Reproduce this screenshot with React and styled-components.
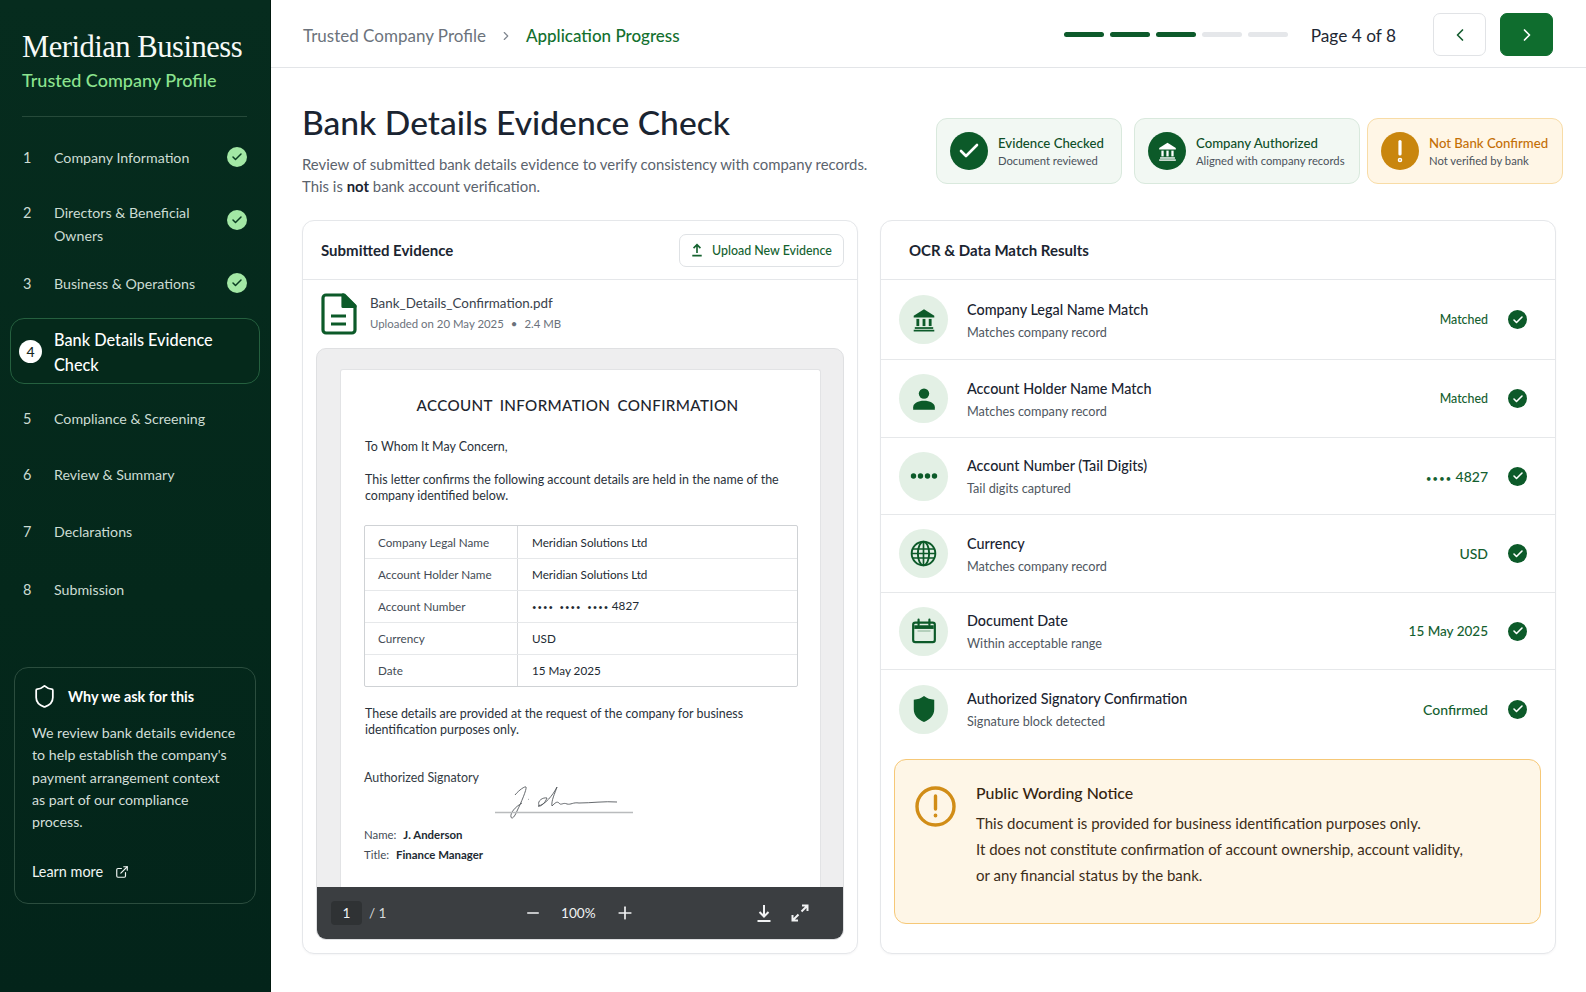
import React from "react";
import styled, { createGlobalStyle } from "styled-components";
import { Check, ChevronLeft, ChevronRight, ChevronRight as Crumb, ExternalLink, Minus, Plus, Shield } from "lucide-react";

const GlobalStyle = createGlobalStyle`
  * { box-sizing: border-box; }
  html, body { margin: 0; padding: 0; background: #fff; }
  body { font-family: Lato, "Noto Sans", sans-serif; color: #1c2530; -webkit-font-smoothing: antialiased; }
`;

const Page = styled.div`
  display: flex;
  width: 1586px;
  height: 992px;
  overflow: hidden;
`;

/* sidebar */
const Side = styled.aside`
  width: 271px;
  flex-shrink: 0;
  display: flex;
  flex-direction: column;
  background: linear-gradient(180deg, #062c1e 0%, #04281b 60%, #03241a 100%);
  border-right: 1px solid #02190f;
  padding: 0 10px 0 10px;
`;
const Brand = styled.div`
  margin: 0 13px 0 12px;
  padding-top: 29px;
  height: 117px;
  border-bottom: 1px solid #264a3a;
`;
const BrandName = styled.div`
  font-family: "Liberation Serif", serif;
  font-size: 30.6px;
  line-height: 36px;
  letter-spacing: -0.5px;
  color: #f7faf8;
`;
const BrandSub = styled.div`
  margin-top: 3px;
  font-size: 18px;
  line-height: 24px;
  font-weight: 500;
  color: #8ce48f;
`;
const Steps = styled.ol`
  list-style: none;
  margin: 12px 0 0;
  padding: 0;
`;
const Step = styled.li`
  display: flex;
  align-items: ${(p) => (p.$top ? "flex-start" : "center")};
  height: ${(p) => p.$h}px;
  padding: ${(p) => (p.$top ? "16px" : "0")} 13px 0 13px;
  color: #ccdcd3;
  font-size: 14.2px;
  line-height: 23px;
`;
const ActiveStep = styled.li`
  display: flex;
  align-items: center;
  height: 66px;
  margin: 7px 0 6px;
  padding: 1px 8px 0 8px;
  border: 1px solid #25603f;
  border-radius: 14px;
  background: #05291b;
  color: #fff;
  font-size: 16.3px;
  font-weight: 500;
  line-height: 25px;
`;
const StepNum = styled.span`
  width: 31px;
  flex-shrink: 0;
  font-size: 14.5px;
`;
const ActiveNum = styled.span`
  width: 23px;
  height: 23px;
  flex-shrink: 0;
  margin-right: 12px;
  border-radius: 50%;
  background: #fff;
  color: #17251e;
  display: flex;
  align-items: center;
  justify-content: center;
  font-size: 14px;
`;
const StepText = styled.span`
  flex: 1;
`;
const StepCheck = styled.span`
  width: 20px;
  height: 20px;
  margin-top: ${(p) => (p.$top ? "9px" : "0")};
  flex-shrink: 0;
  border-radius: 50%;
  background: #a3e8a5;
  color: #0a3d22;
  display: flex;
  align-items: center;
  justify-content: center;
`;
const WhyBox = styled.div`
  margin: 48px 4px 0 4px;
  height: 237px;
  padding: 16px 6px 0 17px;
  border: 1px solid #2b4d3e;
  border-radius: 14px;
`;
const WhyHead = styled.div`
  display: flex;
  align-items: center;
  gap: 11px;
  color: #fff;
  font-size: 14.4px;
  font-weight: 700;
  line-height: 24px;
`;
const WhyBody = styled.p`
  margin: 13px 0 0;
  color: #d3dfd9;
  font-size: 14.2px;
  line-height: 22.3px;
`;
const LearnMore = styled.a`
  display: flex;
  align-items: center;
  gap: 12px;
  margin-top: 30px;
  color: #f1f5f3;
  font-size: 14.4px;
`;

/* main column */
const Main = styled.main`
  flex: 1;
  min-width: 0;
  display: flex;
  flex-direction: column;
`;
const Header = styled.header`
  height: 68px;
  flex-shrink: 0;
  display: flex;
  align-items: center;
  padding: 6px 33px 4px 32px;
  border-bottom: 1px solid #e3e5e8;
`;
const CrumbLink = styled.span`
  margin-top: 2px;
  font-size: 17px;
  color: ${(p) => (p.$on ? "#13702f" : "#6c737c")};
  font-weight: ${(p) => (p.$on ? 500 : 400)};
`;
const CrumbSep = styled.span`
  display: flex;
  margin: 2px 13px 0;
  color: #808790;
`;
const Progress = styled.div`
  margin-left: auto;
  display: flex;
  gap: 6px;
`;
const ProgressBar = styled.span`
  width: 40px;
  height: 5px;
  border-radius: 3px;
  background: ${(p) => (p.$on ? "#0d5a2b" : "#e5e7ea")};
`;
const PageLabel = styled.span`
  margin: 2px 37px 0 23px;
  font-size: 17.3px;
  color: #1e2733;
`;
const NavButton = styled.button`
  width: 53px;
  height: 43px;
  margin-left: ${(p) => (p.$next ? "14px" : "0")};
  display: flex;
  align-items: center;
  justify-content: center;
  border-radius: 7px;
  border: 1px solid ${(p) => (p.$next ? "#0f6d2e" : "#e1e3e6")};
  background: ${(p) => (p.$next ? "#0f6d2e" : "#fff")};
  color: ${(p) => (p.$next ? "#fff" : "#145c2f")};
  padding: 0;
`;
const Intro = styled.section`
  display: flex;
  justify-content: space-between;
  height: 152px;
  padding: 32px 23px 0 31px;
`;
const Title = styled.h1`
  margin: 0;
  font-size: 33.6px;
  line-height: 44px;
  font-weight: 500;
  color: #1a2431;
`;
const Lead = styled.p`
  margin: 9px 0 0;
  font-size: 14.9px;
  line-height: 22px;
  color: #5b636d;
  b { color: #1a2431; font-weight: 700; }
`;
const Badges = styled.div`
  display: flex;
  gap: 12px;
  margin-top: 18px;
  height: 66px;
`;
const Badge = styled.div`
  width: ${(p) => p.$w}px;
  margin-left: ${(p) => p.$ml || 0}px;
  display: flex;
  align-items: center;
  gap: 10px;
  padding-left: 13px;
  border-radius: 11px;
  border: 1px solid ${(p) => (p.$warn ? "#f8dca6" : "#d9e9dd")};
  background: ${(p) => (p.$warn ? "#fff6e6" : "#f2f8f3")};
`;
const BadgeIcon = styled.span`
  width: 38px;
  height: 38px;
  flex-shrink: 0;
  border-radius: 50%;
  display: flex;
  align-items: center;
  justify-content: center;
  color: #fff;
  background: ${(p) => (p.$warn ? "#c9860e" : "#0c5a29")};
`;
const BadgeTitle = styled.div`
  font-size: 13.2px;
  line-height: 18px;
  font-weight: 500;
  color: ${(p) => (p.$warn ? "#c46f06" : "#0e4f28")};
`;
const BadgeSub = styled.div`
  margin-top: 1px;
  font-size: 11.25px;
  line-height: 15px;
  color: #4a525b;
`;
const Columns = styled.div`
  display: flex;
  gap: 22px;
  padding: 0 0 0 31px;
`;
const Card = styled.section`
  width: ${(p) => p.$w}px;
  height: 734px;
  display: flex;
  flex-direction: column;
  border: 1px solid #e5e7ea;
  border-radius: 12px;
  background: #fff;
  box-shadow: 0 1px 2px rgba(20, 30, 40, 0.04);
`;
const CardHead = styled.div`
  height: 59px;
  flex-shrink: 0;
  display: flex;
  align-items: center;
  justify-content: space-between;
  padding: 0 13px 0 ${(p) => p.$pl}px;
  border-bottom: 1px solid #e5e7ea;
`;
const CardTitle = styled.h2`
  margin: 0;
  font-size: 15px;
  font-weight: 700;
  color: #1b2531;
`;
const UploadButton = styled.button`
  width: 165px;
  height: 33px;
  display: flex;
  align-items: center;
  justify-content: center;
  gap: 9px;
  border: 1px solid #dfe2e5;
  border-radius: 7px;
  background: #fff;
  color: #14622f;
  font: 500 12.4px Lato, sans-serif;
`;
const FileRow = styled.div`
  height: 68px;
  flex-shrink: 0;
  display: flex;
  align-items: center;
  gap: 13px;
  padding: 0 0 1px 18px;
`;
const FileInfo = styled.div`
  margin-bottom: 2px;
`;
const FileName = styled.div`
  font-size: 13.4px;
  line-height: 20px;
  color: #3a424c;
`;
const FileMeta = styled.div`
  margin-top: 2px;
  font-size: 11.4px;
  line-height: 18px;
  color: #6b727b;
  span { margin: 0 7px; }
`;
const Viewer = styled.div`
  margin: 0 13px;
  height: 592px;
  display: flex;
  flex-direction: column;
  background: #eeeeef;
  border: 1px solid #dfe0e2;
  border-radius: 10px;
  overflow: hidden;
`;
const Sheet = styled.div`
  flex: 1;
  margin: 20px 22px 0 23px;
  padding: 25px 24px 0 24px;
  background: #fff;
  border: 1px solid #e2e3e5;
  border-bottom: 0;
  border-radius: 3px 3px 0 0;
  color: #2a323b;
  font-size: 12.45px;
  line-height: 16.2px;
`;
const DocTitle = styled.h3`
  margin: 0 0 24px -6px;
  text-align: center;
  font-size: 15.2px;
  line-height: 20px;
  font-weight: 500;
  letter-spacing: 0.35px;
  word-spacing: 3px;
  color: #1d252e;
`;
const DocPara = styled.p`
  margin: 0 0 ${(p) => p.$mb || 0}px;
`;
const DocTable = styled.div`
  margin: 20px 0 19px -1px;
  width: 434px;
  border: 1px solid #cfd2d5;
  border-radius: 2px;
`;
const DocRow = styled.div`
  display: flex;
  height: 32px;
  align-items: center;
  border-top: ${(p) => (p.$first ? "none" : "1px solid #e6e8ea")};
  font-size: 11.7px;
`;
const DocLabel = styled.div`
  width: 153px;
  height: 100%;
  display: flex;
  align-items: center;
  padding-left: 13px;
  border-right: 1px solid #d8dadd;
  color: #444c55;
`;
const DocValue = styled.div`
  padding-left: 14px;
  color: #222a32;
`;
const MaskDots = styled.span`
  font-size: 0.66em;
  letter-spacing: 0.13em;
  word-spacing: 0.35em;
  margin-right: 0.35em;
`;
const SignBlock = styled.div`
  margin: 32px 0 0 -1px;
`;
const SignLine = styled.div`
  display: flex;
  height: 57px;
`;
const SignCaption = styled.span`
  flex-shrink: 0;
  width: 131px;
  color: #333b44;
`;
const SignDrawing = styled.span`
  display: block;
  margin-top: 9px;
`;
const SignMeta = styled.div`
  margin-bottom: 3.8px;
  font-size: 11.4px;
  color: #444c55;
  b { margin-left: 4px; font-weight: 700; color: #222a32; }
`;
const Toolbar = styled.div`
  height: 52px;
  flex-shrink: 0;
  display: flex;
  align-items: center;
  padding: 0 33px 0 14px;
  background: #3b3e41;
  color: #f1f2f3;
  font-size: 13.6px;
`;
const PageBox = styled.span`
  width: 31px;
  height: 24px;
  display: flex;
  align-items: center;
  justify-content: center;
  border-radius: 4px;
  background: #2f3234;
  margin-right: 7px;
`;
const PageTotal = styled.span`
  width: 155px;
  color: #d8d9da;
`;
const Zoom = styled.div`
  display: flex;
  align-items: center;
  gap: 19px;
`;
const ToolIcons = styled.div`
  margin-left: auto;
  display: flex;
  align-items: center;
  gap: 17px;
`;
const ResultRow = styled.div`
  height: ${(p) => p.$h}px;
  flex-shrink: 0;
  display: flex;
  align-items: center;
  padding: 0 28px 0 18px;
  border-bottom: ${(p) => (p.$last ? "none" : "1px solid #e6e8ea")};
`;
const ResultIcon = styled.span`
  width: 49px;
  height: 49px;
  flex-shrink: 0;
  margin-right: 19px;
  border-radius: 50%;
  background: #e3f0e5;
  color: #0c5a29;
  display: flex;
  align-items: center;
  justify-content: center;
`;
const ResultText = styled.div`
  flex: 1;
  margin-top: 2px;
`;
const ResultTitle = styled.div`
  font-size: 14.4px;
  line-height: 20px;
  font-weight: 500;
  color: #1a2431;
`;
const ResultSub = styled.div`
  margin-top: 3px;
  font-size: 12.7px;
  line-height: 19px;
  color: #4f5761;
`;
const ResultValue = styled.div`
  font-size: ${(p) => p.$size}px;
  color: #14602f;
  font-weight: 500;
`;
const ResultCheck = styled.span`
  width: 19px;
  height: 19px;
  margin-left: 20px;
  flex-shrink: 0;
  border-radius: 50%;
  background: #0c5a29;
  color: #fff;
  display: flex;
  align-items: center;
  justify-content: center;
`;
const Notice = styled.div`
  margin: 11px 14px 0 13px;
  height: 165px;
  display: flex;
  gap: 20px;
  padding: 22px 0 0 20px;
  background: #fef6e7;
  border: 1px solid #f6c877;
  border-radius: 12px;
`;
const NoticeMark = styled.span`
  display: block;
  margin-top: 4px;
`;
const NoticeTitle = styled.div`
  margin-bottom: 8px;
  font-size: 15.9px;
  line-height: 22px;
  font-weight: 500;
  color: #35250f;
`;
const NoticeLine = styled.div`
  margin-top: 4px;
  font-size: 15px;
  line-height: 22px;
  color: #3d2d18;
`;

/* drawings */
const BankIcon = ({ size }) => (
  <svg width={size} height={size} viewBox="0 0 24 24" fill="currentColor">
    <path d="M12 2 2.500 8v1.600h19V8z" />
    <rect x="5" y="11" width="2.600" height="6.600" />
    <rect x="10.700" y="11" width="2.600" height="6.600" />
    <rect x="16.400" y="11" width="2.600" height="6.600" />
    <rect x="3.500" y="18.600" width="17" height="1.600" />
    <rect x="2.500" y="21" width="19" height="1.600" />
  </svg>
);
const PersonIcon = () => (
  <svg width="26" height="26" viewBox="0 0 24 24" fill="currentColor">
    <circle cx="12" cy="7" r="4.800" />
    <path d="M2 22v-2.400C2 15.800 6.600 13.600 12 13.600s10 2.200 10 6V22z" />
  </svg>
);
const DotsIcon = () => (
  <svg width="28" height="8" viewBox="0 0 28 8" fill="currentColor">
    <circle cx="3.500" cy="4" r="2.700" />
    <circle cx="10.500" cy="4" r="2.700" />
    <circle cx="17.500" cy="4" r="2.700" />
    <circle cx="24.500" cy="4" r="2.700" />
  </svg>
);
const GlobeIcon = () => (
  <svg width="27" height="27" viewBox="0 0 24 24" fill="none" stroke="currentColor" strokeWidth="1.700">
    <circle cx="12" cy="12" r="10.500" />
    <ellipse cx="12" cy="12" rx="5" ry="10.500" />
    <path d="M12 1.500v21M2.500 8h19M2.500 16h19M1.500 12h21" strokeWidth="1.500" />
  </svg>
);
const CalendarIcon = () => (
  <svg width="26" height="26" viewBox="0 0 24 24" fill="none" stroke="currentColor" strokeWidth="2">
    <rect x="2" y="4.200" width="20" height="18" rx="2" />
    <path d="M7 1.500v5M17 1.500v5" strokeLinecap="round" />
    <path d="M3 8.400h18" strokeWidth="3.400" />
    <path d="M6 12h12" strokeWidth="1" opacity="0.4" />
  </svg>
);
const SolidShield = () => (
  <svg width="26" height="28" viewBox="0 0 24 26" fill="currentColor">
    <path d="M12 1c2.800 2.200 5.800 3.200 9.500 3.400v8.800c0 5.600-3.800 9.600-9.500 11.800-5.700-2.200-9.500-6.200-9.500-11.800V4.400C6.200 4.200 9.200 3.200 12 1z" />
  </svg>
);
const FileIcon = () => (
  <svg width="36" height="42" viewBox="0 0 36 42" fill="none" stroke="#0c5a29" strokeWidth="3.200" strokeLinejoin="round">
    <path d="M5 2h18l11 11v24a3 3 0 0 1-3 3H5a3 3 0 0 1-3-3V5a3 3 0 0 1 3-3z" />
    <path d="M22 2v11.500h12z" fill="#0c5a29" />
    <path d="M10 23h15M10 31h15" />
  </svg>
);
const UploadIcon = () => (
  <svg width="12" height="14" viewBox="0 0 14 16" fill="none" stroke="currentColor" strokeWidth="1.900">
    <path d="M7 11.500V2M3 5.800 7 1.800l4 4M1.500 14.500h11" />
  </svg>
);
const DownloadIcon = () => (
  <svg width="18" height="20" viewBox="0 0 18 20" fill="none" stroke="currentColor" strokeWidth="2">
    <path d="M9 2v11M4.500 9 9 13.500 13.500 9M2.500 18h13" />
  </svg>
);
const ExpandIcon = () => (
  <svg width="20" height="20" viewBox="0 0 20 20" fill="none" stroke="currentColor" strokeWidth="2">
    <path d="M12 2.500h5.500V8M17.500 2.500 11.500 8.500M8 17.500H2.500V12M2.500 17.500l6-6" />
  </svg>
);
const AlertRing = () => (
  <svg width="41" height="41" viewBox="0 0 41 41" fill="none" stroke="#d18d17" strokeWidth="3.400">
    <circle cx="20.500" cy="20.500" r="18.500" />
    <path d="M20.500 10v13" strokeLinecap="round" />
    <circle cx="20.500" cy="29.500" r="1.300" fill="#d18d17" strokeWidth="1.200" />
  </svg>
);
const BangIcon = () => (
  <svg width="24" height="26" viewBox="0 0 24 26" fill="none" stroke="#fff" strokeWidth="3.200" strokeLinecap="round">
    <path d="M12 3.500v12.500" />
    <circle cx="12" cy="22" r="0.700" fill="#fff" />
  </svg>
);
const Signature = () => (
  <svg width="138" height="44" viewBox="0 0 138 44" fill="none" stroke="#55595e" strokeWidth="0.900">
    <path d="M20 16C24 11 30 7 31 8 32 10 26 24 22 32 20 37 17 41 16 38 15 34 20 28 27 24" />
    <path d="M33 20l.6.4" />
    <path d="M44 26C42 22 48 18 52 19 50 24 46 28 43 27 50 26 58 16 62 8 60 14 56 22 57 27 60 24 62 22 64 24 66 27 68 23 72 25 76 26 78 23 84 24 96 24 110 22 122 23" />
    <path d="M0 33.500h138" stroke="#b9bbbd" strokeWidth="1.400" />
  </svg>
);

const STEPS = [
  { n: 1, label: "Company Information", h: 56, done: true },
  { n: 2, label: "Directors & Beneficial Owners", h: 70, done: true, top: true },
  { n: 3, label: "Business & Operations", h: 56, done: true },
];
const LATER = [
  { n: 5, label: "Compliance & Screening", h: 56 },
  { n: 6, label: "Review & Summary", h: 56 },
  { n: 7, label: "Declarations", h: 58 },
  { n: 8, label: "Submission", h: 59 },
];
const ROWS = [
  { icon: <BankIcon size={26} />, title: "Company Legal Name Match", sub: "Matches company record", value: "Matched", size: 12.4, h: 80 },
  { icon: <PersonIcon />, title: "Account Holder Name Match", sub: "Matches company record", value: "Matched", size: 12.4, h: 78 },
  { icon: <DotsIcon />, title: "Account Number (Tail Digits)", sub: "Tail digits captured", value: <><MaskDots>••••</MaskDots>4827</>, size: 14, h: 77 },
  { icon: <GlobeIcon />, title: "Currency", sub: "Matches company record", value: "USD", size: 14, h: 78 },
  { icon: <CalendarIcon />, title: "Document Date", sub: "Within acceptable range", value: "15 May 2025", size: 13.5, h: 77 },
  { icon: <SolidShield />, title: "Authorized Signatory Confirmation", sub: "Signature block detected", value: "Confirmed", size: 14, h: 78, last: true },
];
const DOC = [
  ["Company Legal Name", "Meridian Solutions Ltd"],
  ["Account Holder Name", "Meridian Solutions Ltd"],
  ["Account Number", <><MaskDots>•••• •••• ••••</MaskDots>4827</>],
  ["Currency", "USD"],
  ["Date", "15 May 2025"],
];

export default function App() {
  return (
    <Page>
      <GlobalStyle />
      <Side>
        <Brand>
          <BrandName>Meridian Business</BrandName>
          <BrandSub>Trusted Company Profile</BrandSub>
        </Brand>
        <Steps>
          {STEPS.map((s) => (
            <Step key={s.n} $h={s.h} $top={s.top}>
              <StepNum>{s.n}</StepNum>
              <StepText>{s.label}</StepText>
              <StepCheck $top={s.top}><Check size={12} strokeWidth={3} /></StepCheck>
            </Step>
          ))}
          <ActiveStep>
            <ActiveNum>4</ActiveNum>
            <StepText>Bank Details Evidence Check</StepText>
          </ActiveStep>
          {LATER.map((s) => (
            <Step key={s.n} $h={s.h}>
              <StepNum>{s.n}</StepNum>
              <StepText>{s.label}</StepText>
            </Step>
          ))}
        </Steps>
        <WhyBox>
          <WhyHead><Shield size={25} strokeWidth={1.7} />Why we ask for this</WhyHead>
          <WhyBody>
            We review bank details evidence<br />
            to help establish the company's<br />
            payment arrangement context<br />
            as part of our compliance<br />
            process.
          </WhyBody>
          <LearnMore>Learn more <ExternalLink size={14} /></LearnMore>
        </WhyBox>
      </Side>
      <Main>
        <Header>
          <CrumbLink>Trusted Company Profile</CrumbLink>
          <CrumbSep><Crumb size={14} /></CrumbSep>
          <CrumbLink $on>Application Progress</CrumbLink>
          <Progress>
            {[1, 1, 1, 0, 0].map((on, i) => <ProgressBar key={i} $on={on} />)}
          </Progress>
          <PageLabel>Page 4 of 8</PageLabel>
          <NavButton aria-label="Previous"><ChevronLeft size={20} /></NavButton>
          <NavButton $next aria-label="Next"><ChevronRight size={20} /></NavButton>
        </Header>
        <Intro>
          <div>
            <Title>Bank Details Evidence Check</Title>
            <Lead>
              Review of submitted bank details evidence to verify consistency with company records.<br />
              This is <b>not</b> bank account verification.
            </Lead>
          </div>
          <Badges>
            <Badge $w={186}>
              <BadgeIcon><Check size={24} strokeWidth={2.6} /></BadgeIcon>
              <div><BadgeTitle>Evidence Checked</BadgeTitle><BadgeSub>Document reviewed</BadgeSub></div>
            </Badge>
            <Badge $w={226}>
              <BadgeIcon><BankIcon size={21} /></BadgeIcon>
              <div><BadgeTitle>Company Authorized</BadgeTitle><BadgeSub>Aligned with company records</BadgeSub></div>
            </Badge>
            <Badge $warn $w={196} $ml={-5}>
              <BadgeIcon $warn><BangIcon /></BadgeIcon>
              <div><BadgeTitle $warn>Not Bank Confirmed</BadgeTitle><BadgeSub>Not verified by bank</BadgeSub></div>
            </Badge>
          </Badges>
        </Intro>
        <Columns>
          <Card $w={556}>
            <CardHead $pl={18}>
              <CardTitle>Submitted Evidence</CardTitle>
              <UploadButton><UploadIcon />Upload New Evidence</UploadButton>
            </CardHead>
            <FileRow>
              <FileIcon />
              <FileInfo>
                <FileName>Bank_Details_Confirmation.pdf</FileName>
                <FileMeta>Uploaded on 20 May 2025<span>•</span>2.4 MB</FileMeta>
              </FileInfo>
            </FileRow>
            <Viewer>
              <Sheet>
                <DocTitle>ACCOUNT INFORMATION CONFIRMATION</DocTitle>
                <DocPara $mb={17}>To Whom It May Concern,</DocPara>
                <DocPara>This letter confirms the following account details are held in the name of the company identified below.</DocPara>
                <DocTable>
                  {DOC.map(([k, v], i) => (
                    <DocRow key={k} $first={i === 0}>
                      <DocLabel>{k}</DocLabel>
                      <DocValue>{v}</DocValue>
                    </DocRow>
                  ))}
                </DocTable>
                <DocPara>These details are provided at the request of the company for business identification purposes only.</DocPara>
                <SignBlock>
                  <SignLine>
                    <SignCaption>Authorized Signatory</SignCaption>
                    <SignDrawing><Signature /></SignDrawing>
                  </SignLine>
                  <SignMeta>Name: <b>J. Anderson</b></SignMeta>
                  <SignMeta>Title: <b>Finance Manager</b></SignMeta>
                </SignBlock>
              </Sheet>
              <Toolbar>
                <PageBox>1</PageBox>
                <PageTotal>/ 1</PageTotal>
                <Zoom>
                  <Minus size={18} />
                  <span>100%</span>
                  <Plus size={20} />
                </Zoom>
                <ToolIcons>
                  <DownloadIcon />
                  <ExpandIcon />
                </ToolIcons>
              </Toolbar>
            </Viewer>
          </Card>
          <Card $w={676}>
            <CardHead $pl={28}>
              <CardTitle>OCR &amp; Data Match Results</CardTitle>
            </CardHead>
            {ROWS.map((r) => (
              <ResultRow key={r.title} $h={r.h} $last={r.last}>
                <ResultIcon>{r.icon}</ResultIcon>
                <ResultText>
                  <ResultTitle>{r.title}</ResultTitle>
                  <ResultSub>{r.sub}</ResultSub>
                </ResultText>
                <ResultValue $size={r.size}>{r.value}</ResultValue>
                <ResultCheck><Check size={12} strokeWidth={3.2} /></ResultCheck>
              </ResultRow>
            ))}
            <Notice>
              <NoticeMark><AlertRing /></NoticeMark>
              <div>
                <NoticeTitle>Public Wording Notice</NoticeTitle>
                <NoticeLine>This document is provided for business identification purposes only.</NoticeLine>
                <NoticeLine>It does not constitute confirmation of account ownership, account validity,</NoticeLine>
                <NoticeLine>or any financial status by the bank.</NoticeLine>
              </div>
            </Notice>
          </Card>
        </Columns>
      </Main>
    </Page>
  );
}
